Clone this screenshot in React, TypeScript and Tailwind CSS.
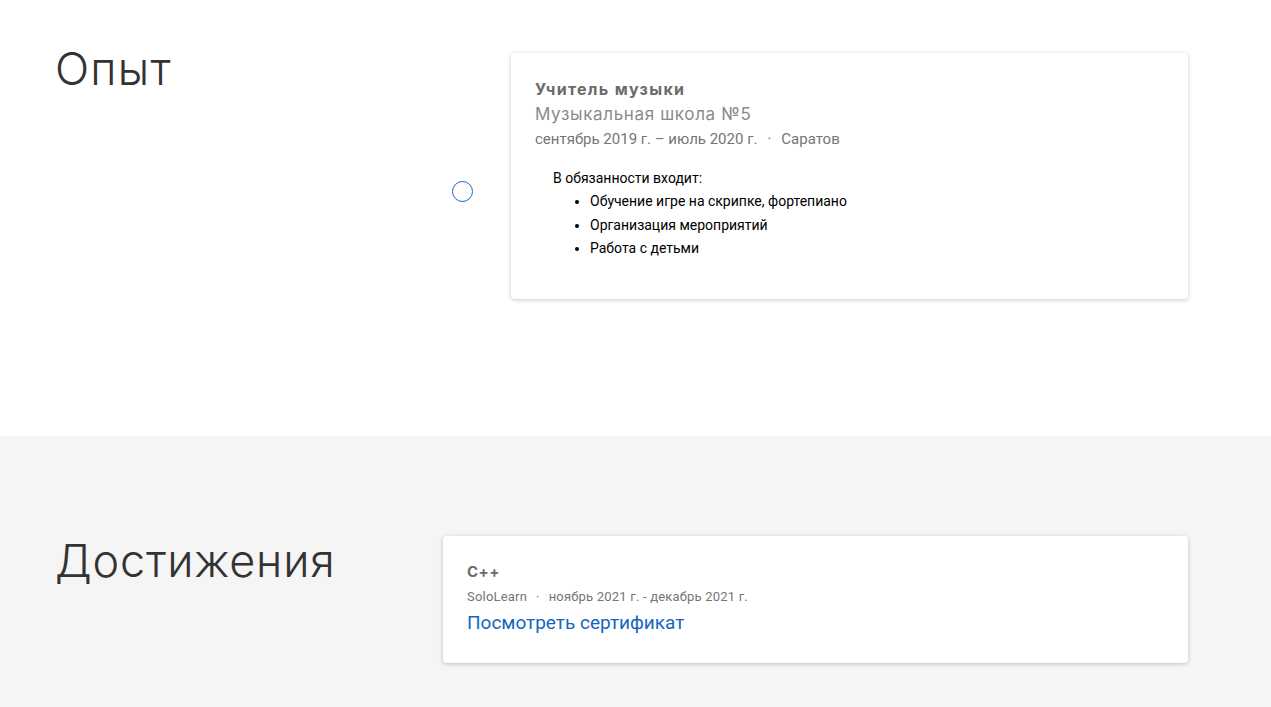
export default function App() {
  return (
    <div className="min-h-screen bg-[#f5f5f5] font-[Roboto]">
      {/* Experience */}
      <section className="bg-white h-[436px] pl-[55px] pr-[83px] pt-[53px]">
        <div className="flex">
          <h2 className="w-[388px] shrink-0 font-[Inter] font-light text-[45px] leading-none text-[#333] -mt-[7px] tracking-[1.2px]">
            Опыт
          </h2>
          <div className="w-[68px] shrink-0 flex items-start pt-[128px] pl-[9px]">
            <div className="w-[21px] h-[21px] rounded-full border-[1.5px] border-[#1565c0]" />
          </div>
          <div className="flex-1 bg-white rounded-[4px] shadow-[0_1px_4px_rgba(0,0,0,0.22)] pt-[24px] px-6 h-[246px]">
            <div className="font-[Inter] font-bold text-[16px] leading-[24px] text-[#6b6b6b] tracking-[1.3px]">
              Учитель музыки
            </div>
            <div className="font-[Inter] text-[17px] leading-[26px] text-[#8a8a8a] tracking-[0.65px]">
              Музыкальная школа №5
            </div>
            <div className="text-[15px] leading-[22px] text-[#757575] mt-[1px]">
              сентябрь 2019 г. – июль 2020 г.
              <span className="mx-[10px]">·</span>
              Саратов
            </div>
            <div className="mt-[17px] pl-[18px] text-[14px] leading-[23.4px] text-black">
              <p>В обязанности входит:</p>
              <ul className="list-disc pl-[37px]">
                <li>Обучение игре на скрипке, фортепиано</li>
                <li>Организация мероприятий</li>
                <li>Работа с детьми</li>
              </ul>
            </div>
          </div>
        </div>
      </section>

      {/* Achievements */}
      <section className="pl-[55px] pr-[83px] pt-[100px] pb-[44px]">
        <div className="flex">
          <h2 className="w-[388px] shrink-0 font-[Inter] font-light text-[45px] leading-none text-[#333] mt-[2px] tracking-[0.8px]">
            Достижения
          </h2>
          <div className="flex-1 bg-white rounded-[4px] shadow-[0_1px_4px_rgba(0,0,0,0.22)] px-6 pt-[26px] h-[127px]">
            <div className="font-[Inter] font-bold text-[15px] leading-[20px] text-[#6b6b6b] tracking-[0.5px]">
              C++
            </div>
            <div className="text-[13px] leading-[18px] text-[#757575] mt-[6px] tracking-[0.2px]">
              SoloLearn
              <span className="mx-[9px]">·</span>
              ноябрь 2021 г. - декабрь 2021 г.
            </div>
            <a href="#" className="block text-[19px] leading-[26px] text-[#1565c0] mt-[4px]">
              Посмотреть сертификат
            </a>
          </div>
        </div>
      </section>
    </div>
  );
}
